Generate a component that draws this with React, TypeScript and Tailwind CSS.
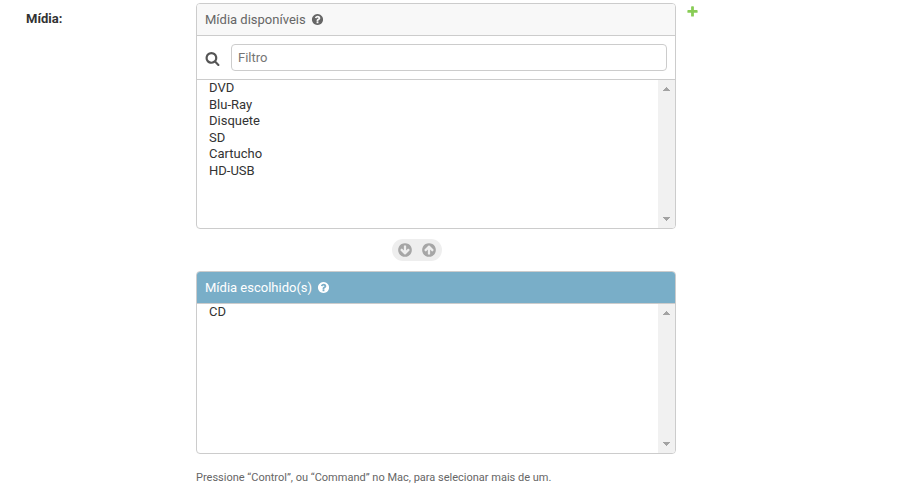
import React from "react";

const DISC =
  "M1664 896q0 209-103 385.5t-279.5 279.5-385.5 103-385.5-103-279.5-279.5-103-385.5 103-385.5 279.5-279.5 385.5-103 385.5 103 279.5 279.5 103 385.5z";

function Icon({ d, className }: { d: string; className: string }) {
  return (
    <svg viewBox="0 0 1792 1792" fill="currentColor" fillRule="evenodd" className={className}>
      <path d={d} />
    </svg>
  );
}

const HELP =
  "M1024 1376v-192q0-14-9-23t-23-9h-192q-14 0-23 9t-9 23v192q0 14 9 23t23 9h192q14 0 23-9t9-23zm256-672q0-88-55.5-163t-138.5-116-170-41q-243 0-371 213-15 24 8 42l132 100q7 6 19 6 16 0 25-12 53-68 86-92 34-24 86-24 48 0 85.5 26t37.5 59q0 38-20 61t-68 45q-63 28-115.5 86.5t-52.5 125.5v36q0 14 9 23t23 9h192q14 0 23-9t9-23q0-19 21.5-49.5t54.5-49.5q32-18 49-28.5t46-35 44.5-48 28-60.5 12.5-81z" +
  DISC;
const SEARCH =
  "M1216 832q0-185-131.5-316.5t-316.5-131.5-316.5 131.5-131.5 316.5 131.5 316.5 316.5 131.5 316.5-131.5 131.5-316.5zm512 832q0 52-38 90t-90 38q-54 0-90-38l-343-342q-179 124-399 124-143 0-273.5-55.5t-225-150-150-225-55.5-273.5 55.5-273.5 150-225 225-150 273.5-55.5 273.5 55.5 225 150 150 225 55.5 273.5q0 220-124 399l343 343q37 37 37 90z";
const PLUS =
  "M1600 796v192q0 40-28 68t-68 28h-416v416q0 40-28 68t-68 28h-192q-40 0-68-28t-28-68v-416h-416q-40 0-68-28t-28-68v-192q0-40 28-68t68-28h416v-416q0-40 28-68t68-28h192q40 0 68 28t28 68v416h416q40 0 68 28t28 68z";
const ARROW =
  "M1413 896q0-27-18-45l-91-91q-18-18-45-18t-45 18l-189 189v-502q0-26-19-45t-45-19h-128q-26 0-45 19t-19 45v502l-189-189q-19-19-45-19t-45 19l-91 91q-18 18-18 45t18 45l362 362 91 91q18 18 45 18t45-18l91-91 362-362q18-18 18-45z" +
  DISC;

function OptionList({ options }: { options: string[] }) {
  return (
    <div className="flex min-h-0 flex-1">
      <ul className="flex-1 pl-3 text-[13px] text-[#333]">
        {options.map((name) => (
          <li key={name} className="h-[16.6px] leading-[16.6px]">
            {name}
          </li>
        ))}
      </ul>
      <div className="flex w-[17px] flex-col items-center justify-between bg-[#f1f1f1] pt-[7px] pb-[7px] text-[#a3a3a3]">
        <svg width="7" height="4" viewBox="0 0 7 4" fill="currentColor" shapeRendering="crispEdges">
          <path d="M3 0h1v1h1v1h1v1h1v1H0V3h1V2h1V1h1z" />
        </svg>
        <svg width="7" height="4" viewBox="0 0 7 4" fill="currentColor" shapeRendering="crispEdges">
          <path d="M0 0h7v1H6v1H5v1H4v1H3V3H2V2H1V1H0z" />
        </svg>
      </div>
    </div>
  );
}

export default function App() {
  return (
    <div className="flex h-[490px] w-[914px] items-start bg-white pt-[3px] pl-[26px] font-[Roboto,sans-serif] text-[13px]">
      <label className="w-[170px] pt-[6px] leading-5 font-bold text-[#333]">Mídia:</label>
      <div className="w-[480px]">
        <section className="flex h-[226px] flex-col overflow-hidden rounded-[4px] border border-[#ccc]">
          <h2 className="flex h-8 shrink-0 items-center border-b border-[#ccc] bg-[#f8f8f8] pl-2 text-[#666]">
            Mídia disponíveis
            <Icon d={HELP} className="ml-[5px] size-[13px]" />
          </h2>
          <div className="flex h-11 shrink-0 items-center border-b border-[#ccc] pr-2 pl-2">
            <Icon d={SEARCH} className="mt-[2px] mr-[11px] size-[15px] text-[#555]" />
            <input
              placeholder="Filtro"
              className="h-[27px] min-w-0 flex-1 rounded-[4px] border border-[#ccc] px-[6px] text-[13px] placeholder:text-[#757575]"
            />
          </div>
          <OptionList options={["DVD", "Blu-Ray", "Disquete", "SD", "Cartucho", "HD-USB"]} />
        </section>
        <div className="mt-[10px] ml-[196px] flex h-[22px] w-[50px] items-center justify-center gap-2 rounded-[11px] bg-[#eee] text-[#a6a6a6]">
          <Icon d={ARROW} className="size-4" />
          <Icon d={ARROW} className="size-4 rotate-180" />
        </div>
        <section className="mt-[10px] flex h-[183px] flex-col overflow-hidden rounded-[4px] border border-[#ccc]">
          <h2 className="flex h-8 shrink-0 items-center border-b border-[#ccc] bg-[#79aec8] pl-2 text-white">
            Mídia escolhido(s)
            <Icon d={HELP} className="ml-[5px] size-[13px]" />
          </h2>
          <OptionList options={["CD"]} />
        </section>
        <p className="mt-[16px] text-[11px] leading-4 text-[#666]">
          Pressione “Control”, ou “Command” no Mac, para selecionar mais de um.
        </p>
      </div>
      <Icon d={PLUS} className="mt-[2px] ml-[10px] size-[13px] text-[#8c5]" />
    </div>
  );
}
